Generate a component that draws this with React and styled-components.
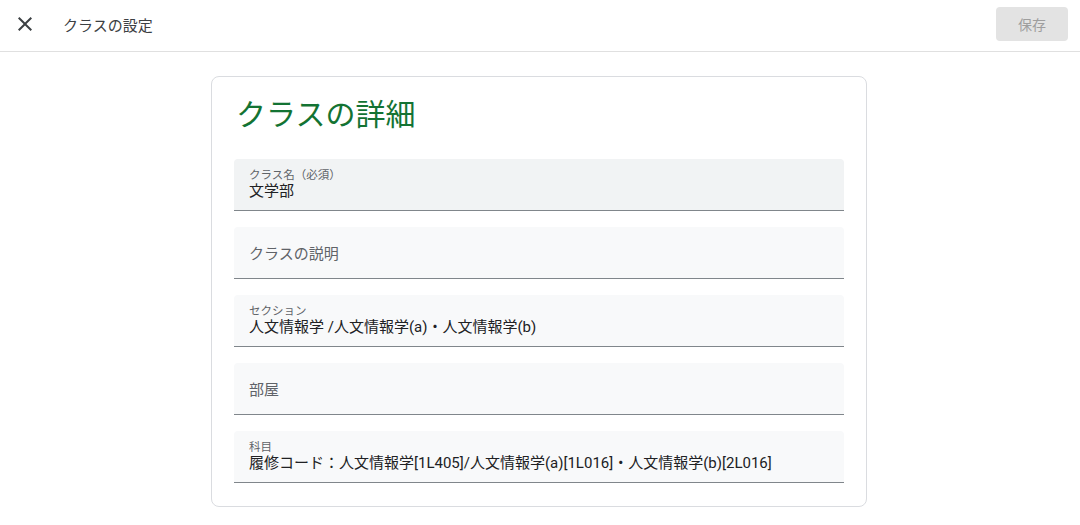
import React from 'react'
import styled, { createGlobalStyle } from 'styled-components'

const GlobalStyles = createGlobalStyle`
  html, body {
    margin: 0;
    padding: 0;
    background: #fff;
    font-family: Roboto, "Noto Sans CJK JP", sans-serif;
    color: #202124;
  }
`

const Header = styled.header`
  height: 48px;
  padding: 0 12px 3px 13px;
  border-bottom: 1px solid #e0e0e0;
  display: flex;
  align-items: center;
`
const CloseButton = styled.button`
  width: 24px;
  height: 24px;
  padding: 0;
  border: none;
  background: none;
  display: grid;
  place-items: center;
  color: #3c4043;
  margin-right: 26px;
`
const Title = styled.h1`
  flex: 1;
  margin: 0;
  font-size: 15px;
  font-weight: 400;
  color: #3c4043;
`
const SaveButton = styled.button`
  width: 72px;
  height: 34px;
  border: none;
  border-radius: 4px;
  background: #e3e3e3;
  color: #9e9e9e;
  font-family: inherit;
  font-size: 14px;
`
const Main = styled.main`
  display: flex;
  justify-content: center;
  padding: 24px 2px 0 0;
`
const Card = styled.section`
  width: 656px;
  box-sizing: border-box;
  border: 1px solid #dadce0;
  border-radius: 8px;
  padding: 12px 22px 23px 22px;
  display: flex;
  flex-direction: column;
  gap: 16px;
`
const CardTitle = styled.h2`
  margin: 0 0 2px 2px;
  font-size: 30px;
  font-weight: 400;
  line-height: 52px;
  color: #137333;
`
const Field = styled.div`
  height: 51px;
  background: ${({ $active }) => ($active ? '#f1f3f4' : '#f8f9fa')};
  border-radius: 4px 4px 0 0;
  border-bottom: 1px solid #80868b;
  padding: 0 15px;
  display: flex;
  flex-direction: column;
  justify-content: center;
`
const Label = styled.span`
  font-size: 11.5px;
  line-height: 14px;
  color: #5f6368;
`
const Value = styled.span`
  font-size: 15px;
  line-height: 19px;
  color: #202124;
`
const Placeholder = styled.span`
  font-size: 15px;
  color: #5f6368;
`

const fields = [
  { label: 'クラス名（必須）', value: '文学部', active: true },
  { placeholder: 'クラスの説明' },
  { label: 'セクション', value: '人文情報学 /人文情報学(a)・人文情報学(b)' },
  { placeholder: '部屋' },
  {
    label: '科目',
    value: '履修コード：人文情報学[1L405]/人文情報学(a)[1L016]・人文情報学(b)[2L016]',
  },
]

const App = () => {
  return (
    <>
      <GlobalStyles />
      <Header>
        <CloseButton aria-label="閉じる">
          <svg width="24" height="24" viewBox="0 0 24 24">
            <path
              d="M19 6.41 17.59 5 12 10.59 6.41 5 5 6.41 10.59 12 5 17.59 6.41 19 12 13.41 17.59 19 19 17.59 13.41 12z"
              fill="currentColor"
            />
          </svg>
        </CloseButton>
        <Title>クラスの設定</Title>
        <SaveButton disabled>保存</SaveButton>
      </Header>
      <Main>
        <Card>
          <CardTitle>クラスの詳細</CardTitle>
          {fields.map((f, i) => (
            <Field key={i} $active={f.active}>
              {f.placeholder ? (
                <Placeholder>{f.placeholder}</Placeholder>
              ) : (
                <>
                  <Label>{f.label}</Label>
                  <Value>{f.value}</Value>
                </>
              )}
            </Field>
          ))}
        </Card>
      </Main>
    </>
  )
}
export default App
